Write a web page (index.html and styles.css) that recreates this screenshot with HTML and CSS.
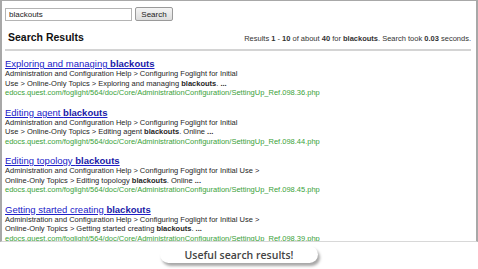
FILE: index.html
```html
<!DOCTYPE html>
<html>
<head>
<meta charset="utf-8">
<link rel="stylesheet" href="styles.css">
</head>
<body>
<div class="frame">
  <form class="searchbar">
    <input class="query" type="text" value="blackouts">
    <button class="btn" type="button">Search</button>
  </form>
  <div class="header">
    <h1 class="title">Search Results</h1>
    <div class="stats">Results <b>1</b> - <b>10</b> of about <b>40</b> for <b>blackouts</b>. Search took <b>0.03</b> seconds.</div>
  </div>
  <div class="results">
    <div class="result">
      <a class="rtitle" href="#">Exploring and managing <b>blackouts</b></a>
      <div class="snippet">Administration and Configuration Help &gt; Configuring Foglight for Initial<br>Use &gt; Online-Only Topics &gt; Exploring and managing <b>blackouts</b>. <b>...</b></div>
      <div class="url">edocs.quest.com/foglight/564/doc/Core/AdministrationConfiguration/SettingUp_Ref.098.36.php</div>
    </div>
    <div class="result">
      <a class="rtitle" href="#">Editing agent <b>blackouts</b></a>
      <div class="snippet">Administration and Configuration Help &gt; Configuring Foglight for Initial<br>Use &gt; Online-Only Topics &gt; Editing agent <b>blackouts</b>. Online <b>...</b></div>
      <div class="url">edocs.quest.com/foglight/564/doc/Core/AdministrationConfiguration/SettingUp_Ref.098.44.php</div>
    </div>
    <div class="result">
      <a class="rtitle" href="#">Editing topology <b>blackouts</b></a>
      <div class="snippet">Administration and Configuration Help &gt; Configuring Foglight for Initial Use &gt;<br>Online-Only Topics &gt; Editing topology <b>blackouts</b>. Online <b>...</b></div>
      <div class="url">edocs.quest.com/foglight/564/doc/Core/AdministrationConfiguration/SettingUp_Ref.098.45.php</div>
    </div>
    <div class="result">
      <a class="rtitle" href="#">Getting started creating <b>blackouts</b></a>
      <div class="snippet">Administration and Configuration Help &gt; Configuring Foglight for Initial Use &gt;<br>Online-Only Topics &gt; Getting started creating <b>blackouts</b>. <b>...</b></div>
      <div class="url">edocs.quest.com/foglight/564/doc/Core/AdministrationConfiguration/SettingUp_Ref.098.39.php</div>
    </div>
  </div>
</div>
<div class="caption-row">
  <div class="caption">Useful search results!</div>
</div>
</body>
</html>
```
FILE: styles.css
```css
html, body {
  margin: 0;
  padding: 0;
  background: #ffffff;
}
body {
  width: 478px;
  height: 269px;
  overflow: hidden;
  font-family: "Liberation Sans", Arial, sans-serif;
}
.frame {
  box-sizing: border-box;
  width: 478px;
  height: 242px;
  border-top: 1px solid #a8a8a8;
  border-left: 2px solid #a8a8a8;
  border-right: 2px solid #a8a8a8;
  border-bottom: 1px solid #d8d8d8;
  overflow: hidden;
  padding: 0 5px 0 3px;
}
.searchbar {
  display: flex;
  align-items: center;
  gap: 3px;
  margin: 6px 0 0 0;
}
.query {
  box-sizing: border-box;
  width: 127px;
  height: 13px;
  border: 1px solid #b4b4b4;
  padding: 0 3px;
  font-family: "Liberation Sans", Arial, sans-serif;
  font-size: 8px;
  color: #222;
  margin: 0;
}
.btn {
  box-sizing: border-box;
  width: 38px;
  height: 14px;
  border: 1px solid #9a9a9a;
  border-radius: 2px;
  background: linear-gradient(#f4f4f4, #dcdcdc);
  font-family: "Liberation Sans", Arial, sans-serif;
  font-size: 8px;
  color: #222;
  padding: 0;
  margin: 0;
}
.header {
  display: flex;
  justify-content: space-between;
  align-items: baseline;
  margin-top: 10px;
  padding: 0 0 6px 3px;
  border-bottom: 2px solid #d4d4d4;
}
.title {
  margin: 0;
  font-size: 10.5px;
  font-weight: bold;
  color: #111;
}
.stats {
  font-size: 7.5px;
  color: #333;
}
.results {
  padding-top: 7px;
}
.result {
  margin-bottom: 9px;
  line-height: 9.5px;
}
.rtitle {
  display: block;
  font-size: 9.5px;
  line-height: 11px;
  color: #2020c8;
  text-decoration: underline;
}
.rtitle b {
  color: #1a1aa8;
}
.snippet {
  font-size: 7.5px;
  color: #262626;
}
.url {
  font-size: 7.5px;
  color: #3aa23a;
}
.caption-row {
  display: flex;
  justify-content: center;
  padding-top: 4px;
}
.caption {
  width: 158px;
  height: 17px;
  border-radius: 9px;
  background: #ffffff;
  box-shadow: 2px 3px 3px rgba(0,0,0,0.35);
  display: flex;
  align-items: center;
  justify-content: center;
  font-family: "Open Sans", sans-serif;
  font-weight: 600;
  font-size: 10.5px;
  color: #444;
}
```
